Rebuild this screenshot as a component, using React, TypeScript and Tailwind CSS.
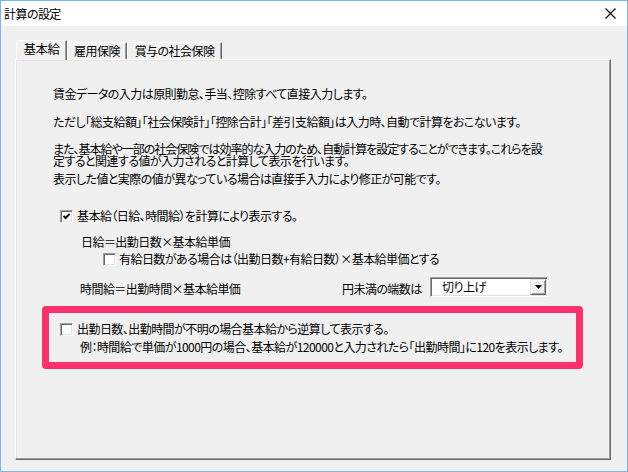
import React from "react";

function CheckBox({ checked }: { checked?: boolean }) {
  return (
    <div className="w-[13px] h-[13px] shrink-0 box-border border border-t-[#a0a0a0] border-l-[#a0a0a0] border-r-white border-b-white shadow-[inset_1px_1px_0_#696969,inset_-1px_-1px_0_#e3e3e3] bg-white flex items-center justify-center">
      {checked && (
        <svg width="9" height="9" viewBox="0 0 9 9">
          <polyline points="1.5,3.8 3.6,6 7.6,1.8" fill="none" stroke="#000" strokeWidth="1.9" />
        </svg>
      )}
    </div>
  );
}

export default function App() {
  return (
    <div className="w-[628px] h-[472px] box-border border border-[#7fb3ea] bg-[#f0f0f0] text-black text-[12px] tracking-[-0.55px] font-['Noto_Sans_CJK_JP',sans-serif] [font-feature-settings:'palt'] overflow-hidden">
      {/* title bar */}
      <div className="h-[25px] bg-white flex items-center justify-between pl-[3px] pr-[11px]">
        <span className="leading-[16px]">計算の設定</span>
        <svg width="11" height="11" viewBox="0 0 11 11">
          <path d="M0.5 0.5 L10.5 10.5 M10.5 0.5 L0.5 10.5" stroke="#000" strokeWidth="1.1" />
        </svg>
      </div>

      {/* body */}
      <div className="pt-[14px] pl-[14px]">
        {/* tabs */}
        <div className="flex items-start mb-[-1px]">
          <div className="relative z-10 ml-[1px] w-[51px] h-[20px] bg-[#f0f0f0] box-border border-t border-l border-t-white border-l-white border-r border-r-[#696969] shadow-[inset_-1px_0_0_#a0a0a0] flex justify-center pt-[1px] leading-[14px] text-[12.5px]">
            基本給
          </div>
          <div className="mt-[2px] w-[60px] h-[17px] box-border border-t border-l border-t-white border-l-white border-r border-r-[#696969] shadow-[inset_-1px_0_0_#a0a0a0] flex justify-center pt-[1px] leading-[14px]">
            雇用保険
          </div>
          <div className="mt-[2px] w-[95px] h-[17px] box-border border-t border-l border-t-white border-l-white border-r border-r-[#696969] shadow-[inset_-1px_0_0_#a0a0a0] flex justify-center pt-[1px] leading-[14px]">
            賞与の社会保険
          </div>
        </div>

        {/* panel */}
        <div className="w-[596px] h-[401px] box-border border border-t-white border-l-white border-r-[#696969] border-b-[#696969] shadow-[inset_-1px_-1px_0_#a0a0a0,inset_1px_1px_0_#e3e3e3]">
          <div className="pt-[26px] pl-[37px]">
            <div className="h-[16px] leading-[16px] whitespace-nowrap">賃金データの入力は原則勤怠、手当、控除すべて直接入力します。</div>
            <div className="mt-[12px] h-[16px] leading-[16px] whitespace-nowrap">ただし「総支給額」「社会保険計」「控除合計」「差引支給額」は入力時、自動で計算をおこないます。</div>
            <div className="mt-[13px] h-[12px] leading-[12px] whitespace-nowrap tracking-[-1px]">また、基本給や一部の社会保険では効率的な入力のため、自動計算を設定することができます。これらを設</div>
            <div className="h-[12px] leading-[12px] whitespace-nowrap">定すると関連する値が入力されると計算して表示を行います。</div>
            <div className="mt-[4px] h-[16px] leading-[16px] whitespace-nowrap">表示した値と実際の値が異なっている場合は直接手入力により修正が可能です。</div>

            <div className="mt-[21px] h-[16px] flex items-center pl-[7px] gap-[4px]">
              <CheckBox checked />
              <span className="leading-[16px] whitespace-nowrap">基本給（日給、時間給）を計算により表示する。</span>
            </div>
            <div className="mt-[10px] h-[16px] leading-[16px] pl-[28px] whitespace-nowrap">日給＝出勤日数×基本給単価</div>
            <div className="mt-[1px] h-[16px] flex items-center pl-[50px] gap-[3px]">
              <CheckBox />
              <span className="leading-[16px] whitespace-nowrap">有給日数がある場合は（出勤日数+有給日数）×基本給単価とする</span>
            </div>

            <div className="mt-[10px] h-[20px] flex items-end pl-[27px]">
              <span className="w-[262px] h-[16px] leading-[16px] whitespace-nowrap">時間給＝出勤時間×基本給単価</span>
              <span className="w-[88px] h-[16px] leading-[16px] whitespace-nowrap">円未満の端数は</span>
              <div className="w-[118px] h-[20px] box-border border border-t-[#a0a0a0] border-l-[#a0a0a0] border-r-white border-b-white shadow-[inset_1px_1px_0_#696969,inset_-1px_-1px_0_#e3e3e3] bg-white flex items-center justify-between pl-[11px] pr-[1px]">
                <span className="leading-[16px]">切り上げ</span>
                <div className="w-[16px] h-[16px] box-border border border-t-[#e3e3e3] border-l-[#e3e3e3] border-r-[#696969] border-b-[#696969] shadow-[inset_1px_1px_0_#ffffff,inset_-1px_-1px_0_#a0a0a0] bg-[#f0f0f0] flex items-center justify-center">
                  <svg width="7" height="4" viewBox="0 0 7 4">
                    <path d="M0 0 L7 0 L3.5 4 Z" fill="#000" />
                  </svg>
                </div>
              </div>
            </div>

            <div className="mt-[9px] -ml-[11px] w-[541px] h-[63px] box-border border-[7px] border-[#fe2f6d] rounded-[4px] pt-[8px] pl-[11px]">
              <div className="h-[16px] flex items-center gap-[4px]">
                <CheckBox />
                <span className="leading-[16px] whitespace-nowrap">出勤日数、出勤時間が不明の場合基本給から逆算して表示する。</span>
              </div>
              <div className="mt-[2px] h-[16px] leading-[16px] pl-[20px] whitespace-nowrap">例：時間給で単価が1000円の場合、基本給が120000と入力されたら「出勤時間」に120を表示します。</div>
            </div>
          </div>
        </div>
      </div>
    </div>
  );
}
